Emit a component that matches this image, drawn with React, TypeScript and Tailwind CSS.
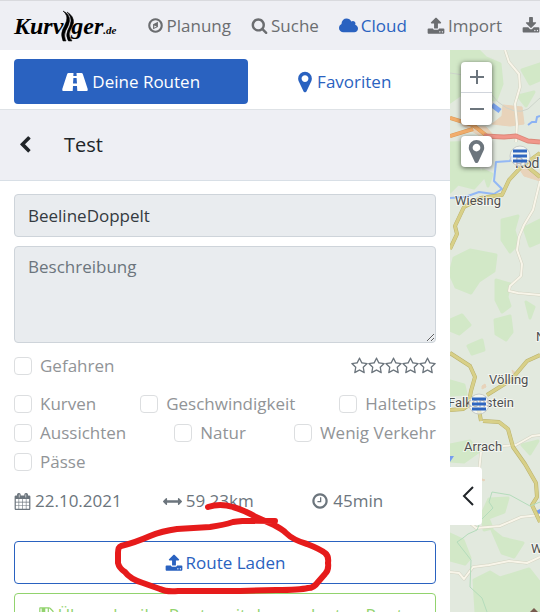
import type { ReactNode } from 'react';

const ICONS = {
  upload:
    'M1344 1472q0-26-19-45t-45-19-45 19-19 45 19 45 45 19 45-19 19-45zm256 0q0-26-19-45t-45-19-45 19-19 45 19 45 45 19 45-19 19-45zm128-224v320q0 40-28 68t-68 28h-1472q-40 0-68-28t-28-68v-320q0-40 28-68t68-28h427q21 56 70.5 92t110.5 36h256q61 0 110.5-36t70.5-92h427q40 0 68 28t28 68zm-325-648q-17 40-59 40h-256v448q0 26-19 45t-45 19h-256q-26 0-45-19t-19-45v-448h-256q-42 0-59-40-17-39 14-69l448-448q18-19 45-19t45 19l448 448q31 30 14 69z',
  download:
    'M1344 1344q0-26-19-45t-45-19-45 19-19 45 19 45 45 19 45-19 19-45zm256 0q0-26-19-45t-45-19-45 19-19 45 19 45 45 19 45-19 19-45zm128-224v320q0 40-28 68t-68 28h-1472q-40 0-68-28t-28-68v-320q0-40 28-68t68-28h465l135 136q58 56 136 56t136-56l136-136h464q40 0 68 28t28 68zm-325-569q17 41-14 70l-448 448q-18 19-45 19t-45-19l-448-448q-31-29-14-70 17-39 59-39h256v-448q0-26 19-45t45-19h256q26 0 45 19t19 45v448h256q42 0 59 39z',
  marker:
    'M1152 640q0-106-75-181t-181-75-181 75-75 181 75 181 181 75 181-75 75-181zm256 0q0 109-33 179l-364 774q-16 33-47.5 52t-67.5 19-67.5-19-46.5-52l-365-774q-33-70-33-179 0-212 150-362t362-150 362 150 150 362z',
  cloud:
    'M1984 1152q0 159-112.5 271.5t-271.5 112.5h-1088q-185 0-316.5-131.5t-131.5-316.5q0-132 71-241.5t187-163.5q-2-28-2-43 0-212 150-362t362-150q158 0 286.5 88t187.5 230q70-62 166-62 106 0 181 75t75 181q0 75-41 138 129 30 213 134.5t84 239.5z',
  search:
    'M1216 832q0-185-131.5-316.5t-316.5-131.5-316.5 131.5-131.5 316.5 131.5 316.5 316.5 131.5 316.5-131.5 131.5-316.5zm512 832q0 52-38 90t-90 38q-54 0-90-38l-343-342q-179 124-399 124-143 0-273.5-55.5t-225-150-150-225-55.5-273.5 55.5-273.5 150-225 225-150 273.5-55.5 273.5 55.5 225 150 150 225 55.5 273.5q0 220-124 399l343 343q37 37 37 90z',
  star: 'M1201 1004l306-297-422-62-189-382-189 382-422 62 306 297-73 421 378-199 377 199zm527-357q0 22-26 48l-363 354 86 500q1 7 1 20 0 50-41 50-19 0-40-12l-449-236-449 236q-22 12-40 12-21 0-31.5-14.5t-10.5-35.5q0-6 2-20l86-500-364-354q-25-27-25-48 0-37 56-46l502-73 225-455q19-41 49-41t49 41l225 455 502 73q56 9 56 46z',
  clock:
    'M1024 544v448q0 14-9 23t-23 9h-320q-14 0-23-9t-9-23v-64q0-14 9-23t23-9h224v-352q0-14 9-23t23-9h64q14 0 23 9t9 23zm416 352q0-148-73-273t-198-198-273-73-273 73-198 198-73 273 73 273 198 198 273 73 273-73 198-198 73-273zm224 0q0 209-103 385.5t-279.5 279.5-385.5 103-385.5-103-279.5-279.5-103-385.5 103-385.5 279.5-279.5 385.5-103 385.5 103 279.5 279.5 103 385.5z',
  compass:
    'M768 1140l256-128-256-128zM1152 500v542l-512 256v-542zm288 396q0-148-73-273t-198-198-273-73-273 73-198 198-73 273 73 273 198 198 273 73 273-73 198-198 73-273zm224 0q0 209-103 385.5t-279.5 279.5-385.5 103-385.5-103-279.5-279.5-103-385.5 103-385.5 279.5-279.5 385.5-103 385.5 103 279.5 279.5 103 385.5z',
  arrows:
    'M1792 896q0 26-19 45l-256 256q-19 19-45 19t-45-19-19-45v-128h-1024v128q0 26-19 45t-45 19-45-19l-256-256q-19-19-19-45t19-45l256-256q19-19 45-19t45 19 19 45v128h1024v-128q0-26 19-45t45-19 45 19l256 256q19 19 19 45z',
  back: 'M1427 301l-531 531 531 531q19 19 19 45t-19 45l-166 166q-19 19-45 19t-45-19l-742-742q-19-19-19-45t19-45l742-742q19-19 45-19t45 19l166 166q19 19 19 45t-19 45z',
  calendar:
    'M192 1664h288v-288h-288zm352 0h320v-288h-320zm-352-352h288v-320h-288zm352 0h320v-320h-320zm-352-384h288v-288h-288zm736 736h320v-288h-320zm-384-736h320v-288h-320zm768 736h288v-288h-288zm-384-352h320v-320h-320zm384 0h288v-320h-288zm-384-384h320v-288h-320zm384 0h288v-288h-288zM512 160h64v320h-64zm704 0h64v320h-64zM1728 384v1280q0 52-38 90t-90 38h-1408q-52 0-90-38t-38-90v-1280q0-52 38-90t90-38h128v-96q0-66 47-113t113-47h64q66 0 113 47t47 113v96h384v-96q0-66 47-113t113-47h64q66 0 113 47t47 113v96h128q52 0 90 38t38 90z',
  save: 'M512 1536h768v-384h-768zm896 0h128v-896q0-14-10-38.5t-20-34.5l-281-281q-10-10-34-20t-39-10v416q0 40-28 68t-68 28h-576q-40 0-68-28t-28-68v-416h-128v1280h128v-416q0-40 28-68t68-28h832q40 0 68 28t28 68zm-384-928v-320q0-13-9.500-22.500t-22.500-9.500h-192q-13 0-22.500 9.500t-9.500 22.500v320q0 13 9.500 22.500t22.500 9.500h192q13 0 22.500-9.500t9.500-22.500zm640 32v928q0 40-28 68t-68 28h-1344q-40 0-68-28t-28-68v-1344q0-40 28-68t68-28h928q40 0 88 20t76 48l280 280q28 28 48 76t20 88z',
};

function Icon({ name, className, viewBox = '0 0 1792 1792' }: { name: keyof typeof ICONS; className: string; viewBox?: string }) {
  return (
    <svg viewBox={viewBox} className={`shrink-0 ${className}`} fill="currentColor" fillRule="evenodd" aria-hidden="true">
      <path d={ICONS[name]} />
    </svg>
  );
}

function RoadIcon() {
  return (
    <svg viewBox="0 0 26 18" className="h-[18px] w-[26px] shrink-0" fill="currentColor" fillRule="evenodd" aria-hidden="true">
      <path d="M6.500 0H11.500L11.300 3H14.700L14.500 0H19.500Q20.400 0 20.800 1L25.700 16Q26 18 25 18H15.300L15 13H11L10.700 18H1Q0 18 .3 16L5.200 1Q5.600 0 6.500 0zM11.400 5L11 10.500H15L14.600 5z" />
    </svg>
  );
}

function Logo() {
  return (
    <a
      href="#"
      aria-label="Kurviger.de"
      className="flex shrink-0 items-center font-['Liberation_Serif',serif] text-2xl leading-8 font-bold text-black italic"
    >
      <span>Kurv</span>
      <svg viewBox="0 0 16 32" className="-mx-1 h-8 w-4" fill="currentColor" stroke="currentColor" strokeWidth=".5" aria-hidden="true">
        <path d="M4 1Q9 5 7.500 11Q6 15 3.500 20Q1.500 25 4 31H7Q4.500 26 6.500 21Q10 15 10.500 11Q11 4 4 1z" />
        <path d="M8 2Q15 6 14.500 13Q13 17 11 21Q9 26 13 31H9.500Q6.500 26 8.500 21Q11.500 15 12 11Q12 6 8 2z" />
      </svg>
      <span>ger</span>
      <span className="self-end text-[11px] leading-6">.de</span>
    </a>
  );
}

function NavLink({ icon, active, label, children }: { icon: ReactNode; active?: boolean; label?: string; children?: ReactNode }) {
  return (
    <a href="#" aria-label={label} className={`flex shrink-0 items-center gap-[3px] ${active ? 'text-[#2a62c0]' : 'text-[#6b6d70]'}`}>
      {icon}
      {children}
    </a>
  );
}

function Check({ label }: { label: string }) {
  return (
    <label className="flex h-[29px] items-center gap-2 text-[#919497]">
      <input type="checkbox" className="size-[18px] shrink-0 appearance-none rounded border border-[#dcdee0] bg-white" />
      {label}
    </label>
  );
}

function Cluster({ x, y }: { x: number; y: number }) {
  return (
    <g>
      <circle cx={x} cy={y} r="10" fill="#fff" fillOpacity=".6" stroke="#c7cbc8" strokeWidth="1" />
      <path d={`M${x - 7} ${y - 5}h14M${x - 7} ${y}h14M${x - 7} ${y + 5}h14`} stroke="#2f66c0" strokeWidth="3" />
    </g>
  );
}

const MINOR_ROADS =
  'M55 0L59 12 69 24 70 37 65 54 67 74 66 92M90 131L83 160 74 175 69 187 67 200 72 214 71 226 60 236 59 241 68 243 90 245M53 396L66 395 82 386 90 385M31 402L29 422M20 473L26 478 50 476 71 467 90 465M0 522L9 523 14 529 23 517 39 515 59 511 77 513 90 507';
const MAIN_ROADS =
  'M0 199L7 184 5 176 14 157 31 148 52 145 59 130 72 116 90 103M0 303L20 316 25 327 21 341 19 352 29 360 31 371M37 345L61 330 77 311 90 305M0 360L13 359 20 354M33 371L49 372 58 379 63 397 75 414 86 433 87 447 82 455 90 472M78 117L90 127';
const ORANGE_ROADS = 'M0 68L23 75 37 86M0 86L23 79';

function MapView() {
  return (
    <svg viewBox="0 0 90 562" preserveAspectRatio="xMinYMin slice" className="absolute inset-0 h-full w-full" role="img" aria-label="Karte">
      <rect width="90" height="562" fill="#e2e9de" />
      <g fill="#d2e8c7" stroke="#d2e8c7" strokeWidth="3" strokeLinejoin="round">
        <path d="M0 0H28L36 8 50 14 52 34 46 50 30 48 10 45 0 52zM72 20L90 14V30L80 34zM68 46L84 42 76 56z" />
        <path d="M0 93L30 92 38 104 28 118 34 127 24 138 8 134 0 142zM33 120L42 124 38 136z" />
        <path d="M52 170L68 166 64 180 68 194 60 202 52 190zM74 178L90 170V192L80 196z" />
        <path d="M4 208L20 200 46 205 44 221 29 231 21 243 6 237 0 224z" />
        <path d="M46 230L60 234 57 247 60 256 52 262 46 250zM76 252L84 257 80 268zM0 270L12 265 20 275 9 284 0 280z" />
        <path d="M45 270L60 266 62 282 56 290 46 284zM18 296L32 290 34 300 22 304zM0 331L14 335 16 344 0 345z" />
        <path d="M0 395L20 391 28 402 14 412 0 411zM39 449L58 448 54 462 38 468 42 478 34 480 32 464z" />
        <path d="M42 480L52 488 73 493 64 507 52 503zM0 484L13 490 20 508 15 514 0 510z" />
        <path d="M24 530L40 522 50 528 79 519 90 533V562H26zM72 395L88 391 80 404z" />
      </g>
      <g fill="#e8d3ba" stroke="#e8d3ba" strokeLinejoin="round">
        <path d="M53 55L72 57 74 74 60 76 42 74 52 66zM12 75L36 77 44 86 30 86zM65 112L78 116 90 124V131L74 126z" />
        <path d="M32 336l3-2 1 3-4 2zM62 320l5 4-3 2zM32 429l3 1-2 1z" />
      </g>
      <path d="M42 55L50 61" stroke="#7ea6ef" strokeWidth="5" fill="none" />
      <path d="M78 75l4-3 4 0 1-5 3-1" stroke="#8bb2f3" strokeWidth="2" fill="none" />
      <path d="M0 148L15 147 29 142 44 144 52 139 44 131 46 112 60 111 62 106" stroke="#93b8f5" strokeWidth="2" fill="none" strokeLinejoin="round" />
      <path d="M0 406l4 0-4 6zM86 461L90 459V466z" fill="#759cef" />
      <g fill="none" strokeLinejoin="round">
        <path d="M0 23L27 27 48 52Q65 66 78 59L90 48" stroke="#cdd4cb" />
        <path d={MINOR_ROADS} stroke="#d3d3c3" strokeWidth="3" />
        <path d={MINOR_ROADS} stroke="#f8f5e9" strokeWidth="2" />
        <path d={MAIN_ROADS} stroke="#b9b16c" strokeWidth="4" />
        <path d={MAIN_ROADS} stroke="#d8d088" strokeWidth="3" />
        <path d={ORANGE_ROADS} stroke="#dc9a58" strokeWidth="4" />
        <path d={ORANGE_ROADS} stroke="#f2ae6c" strokeWidth="3" />
        <path d="M34 86L54 87 66 86 78 91 90 92" stroke="#dc8879" strokeWidth="5" />
        <path d="M34 86L54 87 66 86 78 91 90 92" stroke="#f1978b" strokeWidth="3" />
        <path d="M90 452L80 456 60 445 42 442 39 452 43 458 31 470 27 480 18 484 13 488 7 492 21 510 20 537 32 548 37 562" stroke="#b4dcbb" />
      </g>
      <path d="M80 562L84 558 88 562z" fill="#795b50" />
      <g
        fontFamily="Roboto, sans-serif"
        fontSize="13"
        fill="#505050"
        stroke="#fff"
        strokeWidth="2"
        strokeOpacity=".6"
        paintOrder="stroke"
      >
        <text x="5" y="155">Wiesing</text>
        <text x="65" y="118" fontSize="14">Rod</text>
        <text x="86" y="291">N</text>
        <text x="39" y="334">Völling</text>
        <text x="-2" y="357">Falkenstein</text>
        <text x="14" y="401">Arrach</text>
        <text x="81" y="503">W</text>
      </g>
      <Cluster x={70} y={106} />
      <Cluster x={29} y={354} />
    </svg>
  );
}

function MapControls() {
  return (
    <div className="absolute top-3 left-[11px] flex flex-col gap-[11px] text-[#6c757d]">
      <div className="flex flex-col divide-y divide-gray-300 overflow-hidden rounded bg-white shadow-[0_1px_5px_rgba(0,0,0,0.6)]">
        <button aria-label="Vergrößern" className="flex h-[31px] w-[31px] items-center justify-center">
          <svg viewBox="0 0 14 14" className="size-[14px]" stroke="currentColor" strokeWidth="2">
            <path d="M0 7H14M7 0V14" />
          </svg>
        </button>
        <button aria-label="Verkleinern" className="flex h-8 w-[31px] items-center justify-center">
          <svg viewBox="0 0 14 14" className="size-[14px]" stroke="currentColor" strokeWidth="2">
            <path d="M0 7H14" />
          </svg>
        </button>
      </div>
      <button aria-label="Standort" className="flex size-[31px] items-center justify-center rounded bg-white shadow-[0_1px_5px_rgba(0,0,0,0.6)]">
        <Icon name="marker" className="size-[27px]" />
      </button>
    </div>
  );
}

/** Hand-drawn red ring around the load button. */
function Scribble() {
  return (
    <svg
      viewBox="0 0 230 100"
      className="pointer-events-none absolute -top-[41px] left-[102px] h-[100px] w-[230px] overflow-visible"
      fill="none"
      stroke="#e61b1b"
      strokeWidth="6"
      strokeLinecap="round"
      strokeLinejoin="round"
      aria-hidden="true"
    >
      <path d="M92 7Q104 3 117 7Q128 10 140 17L158 25Q166 29 170 33Q177 40 191 44Q204 49 209 53Q213 56 212 63Q213 70 209 74L202 82Q198 88 192 88Q184 90 160 90L124 91H62Q50 92 44 89L27 83Q14 79 9 72Q3 68 2 63V53Q2 47 5 46Q18 43 34 36Q46 31 61 29L94 27Q108 25 117 22Q128 20 159 21" />
    </svg>
  );
}

export default function App() {
  return (
    <div className="flex h-screen flex-col overflow-hidden bg-white font-['Open_Sans','Noto_Sans',sans-serif] text-[17px] leading-6 text-[#6c757d]">
      <header className="flex h-[50px] shrink-0 items-center overflow-hidden border-t border-[#d9dade] bg-[#eeeff4] pl-[14px]">
        <Logo />
        <nav className="ml-[30px] flex items-center gap-5">
          <NavLink icon={<Icon name="compass" className="size-[17px]" />}>Planung</NavLink>
          <NavLink icon={<Icon name="search" className="size-[17px]" />}>Suche</NavLink>
          <NavLink active icon={<Icon name="cloud" viewBox="64 0 1920 1792" className="h-[18px] w-[19px]" />}>
            Cloud
          </NavLink>
          <NavLink icon={<Icon name="upload" className="size-[18px]" />}>Import</NavLink>
          <NavLink label="Export" icon={<Icon name="download" className="size-[18px]" />} />
        </nav>
      </header>

      <div className="flex min-h-0 flex-1">
        <main className="w-5/6 shrink-0 overflow-hidden">
          <div className="flex h-[60px] items-start border-b border-[#dee2e6] px-[14px] pt-[9px]">
            <button className="flex h-[45px] flex-5 items-center justify-center gap-1 rounded bg-[#2a62c0] text-white">
              <RoadIcon />
              Deine Routen
            </button>
            <button className="flex h-[45px] flex-4 items-center justify-center text-[#2a62c0]">
              <Icon name="marker" className="size-6" />
              Favoriten
            </button>
          </div>

          <div className="flex h-[71px] items-center gap-[30px] border-b border-[#d8dfe6] bg-[#eeeff4] px-4 text-[#212529]">
            <button aria-label="Zurück">
              <Icon name="back" className="size-[18px]" />
            </button>
            <h1 className="text-xl leading-7">Test</h1>
          </div>

          <form className="px-[14px] pt-[13px]" onSubmit={(e) => e.preventDefault()}>
            <input
              aria-label="Name"
              defaultValue="BeelineDoppelt"
              className="block h-[43px] w-full rounded border border-[#ced4da] bg-[#e9ecef] px-[13px] text-[#343a40]"
            />
            <textarea
              aria-label="Beschreibung"
              placeholder="Beschreibung"
              className="mt-[9px] block h-[97px] w-full rounded border border-[#ced4da] bg-[#e9ecef] px-[13px] py-2 placeholder:text-[#6c757d]"
            />

            <div className="mt-2 flex items-center justify-between">
              <Check label="Gefahren" />
              <div className="flex" role="group" aria-label="Bewertung">
                {[1, 2, 3, 4, 5].map((n) => (
                  <button key={n} type="button" aria-label={`${n} Sterne`}>
                    <Icon name="star" viewBox="64 0 1664 1792" className="h-[18px] w-[17px]" />
                  </button>
                ))}
              </div>
            </div>

            <div className="mt-[9px]">
              <div className="flex justify-between">
                <Check label="Kurven" />
                <Check label="Geschwindigkeit" />
                <Check label="Haltetips" />
              </div>
              <div className="flex justify-between">
                <Check label="Aussichten" />
                <Check label="Natur" />
                <Check label="Wenig Verkehr" />
              </div>
              <Check label="Pässe" />
            </div>

            <div className="mt-[13px] -mr-6 grid grid-cols-3">
              <div className="flex items-center gap-1">
                <Icon name="calendar" className="size-[17px]" />
                22.10.2021
              </div>
              <div className="flex items-center gap-1">
                <Icon name="arrows" className="size-[19px]" />
                59.23km
              </div>
              <div className="flex items-center gap-1">
                <Icon name="clock" className="size-[18px]" />
                45min
              </div>
            </div>

            <div className="relative mt-7">
              <button className="flex h-[43px] w-full items-center justify-center gap-[3px] rounded border border-[#2a62c0] text-[#2a62c0]">
                <Icon name="upload" className="size-[18px]" />
                Route Laden
              </button>
              <Scribble />
            </div>
            <button className="mt-[9px] flex h-[43px] w-full items-center justify-center gap-[3px] rounded border border-[#92d36e] whitespace-nowrap text-[#92d36e]">
              <Icon name="save" className="size-[17px]" />
              Überschreibe Route mit der geplanten Route
            </button>
          </form>
        </main>

        <aside className="relative flex-1 overflow-hidden">
          <MapView />
          <MapControls />
          <button
            aria-label="Seitenleiste einklappen"
            className="absolute top-[417px] left-0 flex h-[58px] w-8 items-center justify-center rounded-r bg-white pl-1 text-[#212529]"
          >
            <svg viewBox="0 0 12 20" className="h-5 w-3" fill="none" stroke="currentColor" strokeWidth="2">
              <path d="M11 1L2 10L11 19" />
            </svg>
          </button>
        </aside>
      </div>
    </div>
  );
}
